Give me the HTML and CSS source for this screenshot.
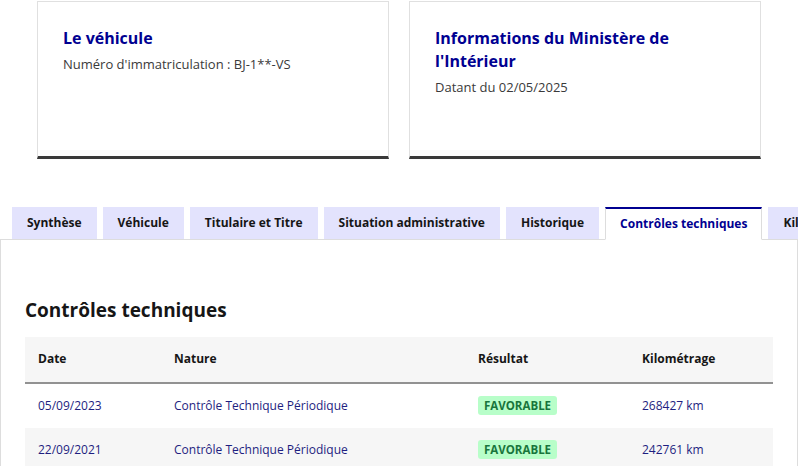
FILE: index.html
```html
<!DOCTYPE html>
<html lang="fr">
<head>
<meta charset="utf-8">
<link rel="stylesheet" href="styles.css">
</head>
<body>
<div class="cards">
  <div class="card">
    <h3 class="card-title">Le véhicule</h3>
    <p class="card-desc">Numéro d'immatriculation : BJ-1**-VS</p>
  </div>
  <div class="card">
    <h3 class="card-title">Informations du Ministère de l'Intérieur</h3>
    <p class="card-desc">Datant du 02/05/2025</p>
  </div>
</div>
<div class="tabs">
  <ul class="tab-list">
    <li class="tab">Synthèse</li>
    <li class="tab">Véhicule</li>
    <li class="tab">Titulaire et Titre</li>
    <li class="tab">Situation administrative</li>
    <li class="tab">Historique</li>
    <li class="tab active">Contrôles techniques</li>
    <li class="tab">Kilométrage</li>
  </ul>
  <div class="panel">
    <h2 class="panel-title">Contrôles techniques</h2>
    <table class="table">
      <thead>
        <tr><th class="c-date">Date</th><th class="c-nature">Nature</th><th class="c-res">Résultat</th><th class="c-km">Kilométrage</th></tr>
      </thead>
      <tbody>
        <tr><td>05/09/2023</td><td>Contrôle Technique Périodique</td><td><span class="badge">FAVORABLE</span></td><td>268427 km</td></tr>
        <tr class="alt"><td>22/09/2021</td><td>Contrôle Technique Périodique</td><td><span class="badge">FAVORABLE</span></td><td>242761 km</td></tr>
      </tbody>
    </table>
  </div>
</div>
</body>
</html>
```
FILE: styles.css
```css
* { box-sizing: border-box; }
html, body { margin: 0; padding: 0; background: #fff; }
body {
  font-family: "Open Sans", "Noto Sans", sans-serif;
  color: #161616;
  width: 798px;
  height: 466px;
  overflow: hidden;
}
.cards {
  display: flex;
  gap: 20px;
  padding: 1px 0 0 37px;
}
.card {
  width: 352px;
  height: 158px;
  border: 1px solid #e0e0e0;
  border-bottom: 3px solid #3a3a3a;
  padding: 25px 25px 0 25px;
}
.card-title {
  margin: 0;
  font-size: 16px;
  font-weight: 700;
  line-height: 23px;
  color: #000091;
}
.card-desc {
  margin: 4px 0 0 0;
  font-size: 13px;
  line-height: 20px;
  color: #3a3a3a;
}
.tabs { margin-top: 48px; }
.tab-list {
  list-style: none;
  margin: 0;
  padding: 0 0 0 12px;
  display: flex;
  gap: 6px;
  white-space: nowrap;
  position: relative;
  z-index: 1;
  overflow: hidden;
}
.tab {
  height: 33px;
  line-height: 32px;
  padding: 0 15px;
  background: #e3e3fd;
  font-size: 12px;
  font-weight: 700;
  color: #161616;
  flex: none;
  border-bottom: 1px solid #ddd;
}
.tab.active {
  background: #fff;
  color: #000091;
  border-top: 2px solid #000091;
  border-left: 1px solid #ddd;
  border-right: 1px solid #ddd;
  border-bottom: 1px solid #fff;
  line-height: 30px;
  padding: 0 14px;
}
.panel {
  margin-top: -1px;
  border: 1px solid #ddd;
  border-bottom: none;
  padding: 58px 24px 0 24px;
  height: 240px;
}
.panel-title {
  margin: 0 0 14px 0;
  font-size: 19px;
  line-height: 25px;
  font-weight: 700;
  color: #161616;
}
.table {
  width: 748px;
  border-collapse: collapse;
  font-size: 12px;
}
.table th {
  text-align: left;
  font-weight: 700;
  background: #f6f6f6;
  height: 46px;
  padding: 0 13px 2px 13px;
  border-bottom: 2px solid #929292;
  color: #161616;
}
.table td {
  height: 45px;
  padding: 0 13px 2px 13px;
  color: #1e1e80;
}
.table tr.alt td { background: #f6f6f6; }
.c-date { width: 136px; }
.c-nature { width: 304px; }
.c-res { width: 164px; }
.badge {
  display: inline-block;
  background: #b8fec9;
  color: #18753c;
  font-weight: 700;
  font-size: 11.5px;
  line-height: 19px;
  padding: 0 6px;
  border-radius: 3px;
}
```
